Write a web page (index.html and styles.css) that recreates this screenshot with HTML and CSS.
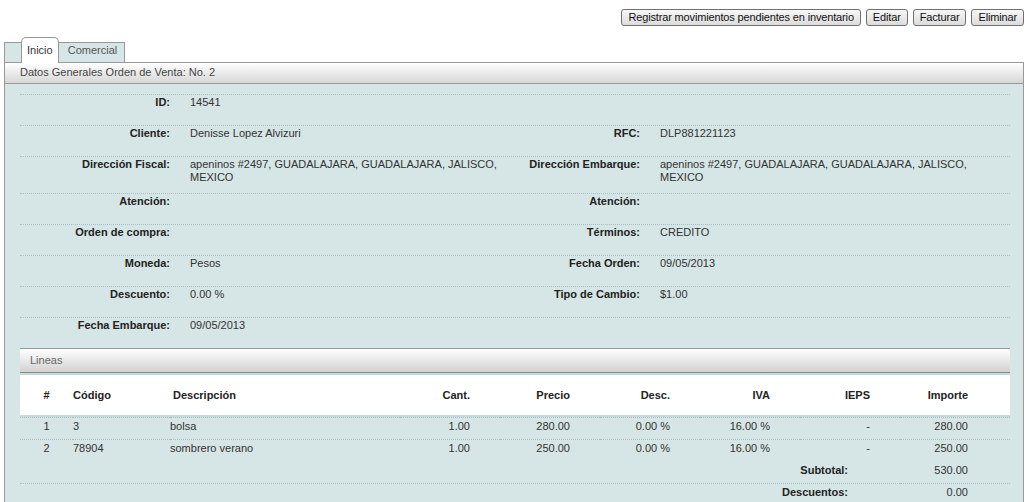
FILE: index.html
```html
<!DOCTYPE html>
<html lang="es">
  <head>
    <meta charset="UTF-8" />
    <title>Orden de Venta</title>
    <link rel="stylesheet" href="styles.css">
  </head>
  <body>
    <div class="toolbar">
      <button>Registrar movimientos pendientes en inventario</button>
      <button>Editar</button>
      <button>Facturar</button>
      <button>Eliminar</button>
    </div>

    <div class="tab-bar">
      <span class="tab-lead"></span>
      <span class="tab active">Inicio</span>
      <span class="tab">Comercial</span>
    </div>

    <div class="panel">
      <div class="panel-header">Datos Generales Orden de Venta: No. 2</div>
      <div class="panel-body">
        <div class="fields">
          <div class="field-row">
            <span class="label">ID:</span><span class="value">14541</span>
            <span class="label"></span><span class="value"></span>
          </div>
          <div class="field-row">
            <span class="label">Cliente:</span><span class="value">Denisse Lopez Alvizuri</span>
            <span class="label">RFC:</span><span class="value">DLP881221123</span>
          </div>
          <div class="field-row">
            <span class="label">Dirección Fiscal:</span>
            <span class="value">apeninos #2497, GUADALAJARA, GUADALAJARA, JALISCO, MEXICO</span>
            <span class="label">Dirección Embarque:</span>
            <span class="value">apeninos #2497, GUADALAJARA, GUADALAJARA, JALISCO, MEXICO</span>
          </div>
          <div class="field-row">
            <span class="label">Atención:</span><span class="value"></span>
            <span class="label">Atención:</span><span class="value"></span>
          </div>
          <div class="field-row">
            <span class="label">Orden de compra:</span><span class="value"></span>
            <span class="label">Términos:</span><span class="value">CREDITO</span>
          </div>
          <div class="field-row">
            <span class="label">Moneda:</span><span class="value">Pesos</span>
            <span class="label">Fecha Orden:</span><span class="value">09/05/2013</span>
          </div>
          <div class="field-row">
            <span class="label">Descuento:</span><span class="value">0.00 %</span>
            <span class="label">Tipo de Cambio:</span><span class="value">$1.00</span>
          </div>
          <div class="field-row">
            <span class="label">Fecha Embarque:</span><span class="value">09/05/2013</span>
            <span class="label"></span><span class="value"></span>
          </div>
        </div>

        <div class="section">
          <div class="section-head">Lineas</div>
          <table class="lines">
            <colgroup>
              <col style="width: 53px">
              <col style="width: 97px">
              <col style="width: 230px">
              <col style="width: 100px">
              <col style="width: 100px">
              <col style="width: 100px">
              <col style="width: 100px">
              <col style="width: 100px">
              <col style="width: 110px">
            </colgroup>
            <thead>
              <tr>
                <th class="center">#</th>
                <th>Código</th>
                <th class="desc">Descripción</th>
                <th class="num">Cant.</th>
                <th class="num">Precio</th>
                <th class="num">Desc.</th>
                <th class="num">IVA</th>
                <th class="num">IEPS</th>
                <th class="num last">Importe</th>
              </tr>
            </thead>
            <tbody>
              <tr>
                <td class="center">1</td>
                <td>3</td>
                <td>bolsa</td>
                <td class="num">1.00</td>
                <td class="num">280.00</td>
                <td class="num">0.00 %</td>
                <td class="num">16.00 %</td>
                <td class="num">-</td>
                <td class="num last">280.00</td>
              </tr>
              <tr>
                <td class="center">2</td>
                <td>78904</td>
                <td>sombrero verano</td>
                <td class="num">1.00</td>
                <td class="num">250.00</td>
                <td class="num">0.00 %</td>
                <td class="num">16.00 %</td>
                <td class="num">-</td>
                <td class="num last">250.00</td>
              </tr>
              <tr class="no-line">
                <td colspan="8" class="total-label">Subtotal:</td>
                <td class="num last">530.00</td>
              </tr>
              <tr>
                <td colspan="8" class="total-label">Descuentos:</td>
                <td class="num last">0.00</td>
              </tr>
            </tbody>
          </table>
        </div>
      </div>
    </div>
  </body>
</html>
```

FILE: styles.css
```css
body {
  margin: 0;
  padding: 0 4px;
  font-family: "Liberation Sans", Arial, sans-serif;
  font-size: 11px;
  line-height: 13px;
  color: #333;
  background-color: #fff;
}

.toolbar {
  display: flex;
  justify-content: flex-end;
  gap: 5px;
  height: 37px;
  padding-top: 9px;
  box-sizing: border-box;
}

.toolbar button {
  height: 17px;
  padding: 0 6px;
  font-family: "Liberation Sans", Arial, sans-serif;
  font-size: 11px;
  line-height: 15px;
  letter-spacing: -0.15px;
  color: #111;
  background: linear-gradient(#f7f7f7, #dcdcdc);
  border: 1px solid #707070;
  border-radius: 3px;
  cursor: pointer;
}

.tab-bar {
  display: flex;
  align-items: flex-end;
  height: 25px;
}

.tab-lead {
  width: 17px;
  height: 20px;
  box-sizing: border-box;
  background-color: #d6e5e5;
  border-top: 1px solid #999;
  border-left: 1px solid #999;
}

.tab {
  display: flex;
  align-items: flex-end;
  height: 20px;
  box-sizing: border-box;
  padding: 0 7px 5px 9px;
  background-color: #d6e5e5;
  border-top: 1px solid #999;
  border-right: 1px solid #999;
  color: #555;
}

.tab.active {
  position: relative;
  z-index: 1;
  height: 26px;
  margin-bottom: -1px;
  padding: 0 5px 6px;
  background-color: #fff;
  border-left: 1px solid #999;
  border-radius: 5px 5px 0 0;
  color: #333;
}

.panel {
  border-left: 1px solid #999;
  border-right: 1px solid #999;
}

.panel-header {
  height: 22px;
  box-sizing: border-box;
  padding: 3px 15px 0;
  background: linear-gradient(#ffffff, #d6d6d6);
  border-top: 1px solid #999;
  border-bottom: 1px solid #999;
  color: #444;
}

.panel-body {
  background-color: #d6e5e5;
  padding: 10px 13px 30px 15px;
}

.field-row {
  display: grid;
  grid-template-columns: 150px 310px 120px 310px;
  column-gap: 20px;
  min-height: 31px;
  box-sizing: border-box;
  padding: 1px 0 9px;
  border-top: 1px dotted #aabdbd;
}

.field-row:last-child {
  padding-bottom: 10px;
}

.label {
  text-align: right;
  font-weight: bold;
  white-space: nowrap;
  color: #222;
}

.value {
  color: #333;
}

.section-head {
  height: 25px;
  box-sizing: border-box;
  padding: 5px 10px 0;
  background: linear-gradient(#ffffff, #d2d2d2);
  border-top: 1px solid #999;
  border-bottom: 1px solid #8a8a8a;
  color: #666;
}

.lines {
  width: 990px;
  table-layout: fixed;
  border-collapse: separate;
  border-spacing: 0;
}

.lines th {
  padding: 14px 0 13px;
  background-color: #fff;
  border-top: 2px solid #c4d9d9;
  border-bottom: 2px solid #c4d9d9;
  font-weight: bold;
  text-align: left;
  color: #222;
}

.lines td {
  padding: 2px 0 6px;
  border-top: 1px dotted #aabdbd;
  color: #333;
}

.lines tr.no-line td {
  border-top-color: transparent;
}

.lines .center {
  text-align: center;
}

.lines .desc {
  padding-left: 3px;
}

.lines .num {
  text-align: right;
  padding-right: 30px;
}

.lines .num.last {
  padding-right: 42px;
}

.lines .total-label {
  text-align: right;
  padding-right: 52px;
  font-weight: bold;
  color: #222;
}
```
